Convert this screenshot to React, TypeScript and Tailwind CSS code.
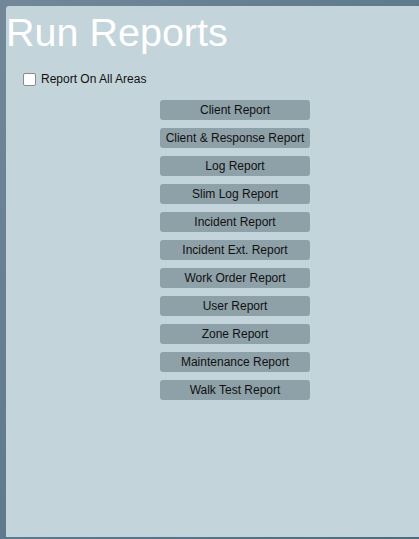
import React from "react"

const reports = [
  "Client Report",
  "Client & Response Report",
  "Log Report",
  "Slim Log Report",
  "Incident Report",
  "Incident Ext. Report",
  "Work Order Report",
  "User Report",
  "Zone Report",
  "Maintenance Report",
  "Walk Test Report"
]

export default function App() {
  return (
    <div
      className="h-[539px] w-[419px] overflow-hidden bg-gradient-to-br from-[#728898] via-[#5e7a8c] to-[#4c6c80] pl-[6px] pt-[6px]"
      style={{ fontFamily: '"Liberation Sans", Arial, sans-serif' }}
    >
      <div className="h-[531px] w-full rounded-tl-[3px] bg-[#c3d4db] pt-[6px]">
        {/* Title */}
        <h1 className="text-[39.5px] leading-[40px] font-normal text-white">
          Run Reports
        </h1>

        {/* All areas toggle */}
        <label className="mt-[19px] ml-[17px] flex h-[16px] items-center gap-[5px] text-[12px] text-[#111]">
          <input
            type="checkbox"
            className="m-0 h-[13px] w-[13px] appearance-none rounded-[2px] border border-[#8a8a8a] bg-white"
          />
          <span>Report On All Areas</span>
        </label>

        {/* Report buttons */}
        <div className="mt-[13px] ml-[154px] flex w-[150px] flex-col gap-[8px]">
          {reports.map((name) => (
            <button
              key={name}
              className="h-[20px] w-[150px] rounded-[3px] bg-[#8ea0a8] text-[12px] leading-[20px] text-[#111]"
            >
              {name}
            </button>
          ))}
        </div>
      </div>
    </div>
  )
}
